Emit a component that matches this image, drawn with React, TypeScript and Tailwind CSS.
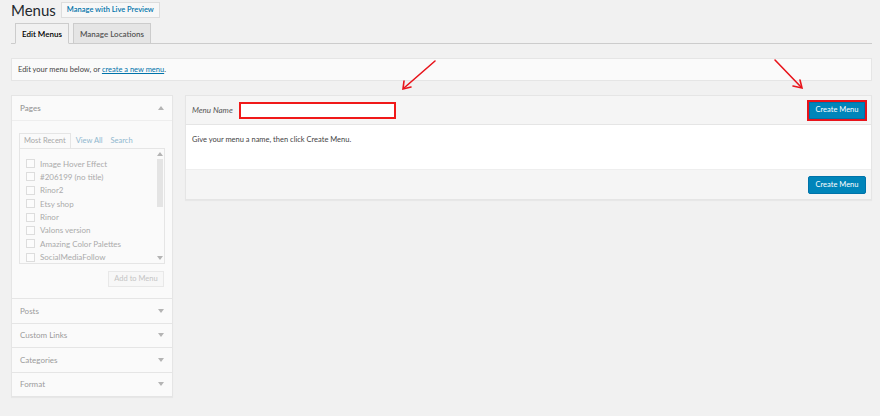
import React from 'react';

const pages = [
  'Image Hover Effect',
  '#206199 (no title)',
  'Rinor2',
  'Etsy shop',
  'Rinor',
  'Valons version',
  'Amazing Color Palettes',
  'SocialMediaFollow',
];

const sections = ['Posts', 'Custom Links', 'Categories', 'Format'];

function Caret({ up }: { up?: boolean }) {
  return (
    <span
      className={`w-0 h-0 border-l-[3px] border-r-[3px] border-l-transparent border-r-transparent ${
        up ? 'border-b-[4px] border-b-[#b4b4b4]' : 'border-t-[4px] border-t-[#b4b4b4]'
      }`}
    />
  );
}

function Arrows() {
  return (
    <svg className="absolute inset-0 pointer-events-none" width="880" height="416">
      <g stroke="#e8141b" strokeWidth="1.6" fill="none" strokeLinecap="round">
        <line x1="435" y1="61" x2="404" y2="88" />
        <polyline points="404,81 403,89 411,87" />
        <line x1="775" y1="60" x2="801" y2="87" />
        <polyline points="793,86 802,88 800,80" />
      </g>
    </svg>
  );
}

export default function App() {
  return (
    <div
      className="relative w-[880px] h-[416px] overflow-hidden bg-[#f1f1f1] text-[#444]"
      style={{ fontFamily: 'Lato, "Open Sans", sans-serif' }}
    >
      <div className="pl-[11px] pr-[8px]">
        {/* title */}
        <div className="flex items-center gap-[5px] h-[19px] pt-[1px]">
          <h1 className="text-[15px] leading-none text-[#23282d]">Menus</h1>
          <button className="h-[16px] px-[5px] border border-[#ddd] bg-[#f7f7f7] text-[#0073aa] text-[7.5px] font-semibold leading-none">
            Manage with Live Preview
          </button>
        </div>

        {/* tabs */}
        <div className="mt-[5px] flex items-end gap-[4px] pl-[4px] border-b border-[#ccc] h-[20px]">
          <div className="h-[21px] -mb-px px-[6px] flex items-center bg-[#f1f1f1] border border-[#ccc] border-b-[#f1f1f1] text-[8px] font-semibold text-[#000]">
            Edit Menus
          </div>
          <div className="h-[20px] px-[6px] flex items-center bg-[#e5e5e5] border border-[#ccc] border-b-0 text-[8px] font-semibold text-[#555]">
            Manage Locations
          </div>
        </div>

        {/* notice */}
        <div className="mt-[14px] h-[23px] flex items-center px-[6px] bg-[#fafafa] border border-[#e5e5e5] text-[7.5px] text-[#444]">
          Edit your menu below, or&nbsp;
          <span className="text-[#0073aa] underline">create a new menu</span>.
        </div>

        <div className="mt-[14px] flex gap-[12px] items-start">
          {/* sidebar */}
          <div className="w-[162px] flex flex-col shadow-[0_1px_1px_rgba(0,0,0,0.04)]">
            <div className="border border-[#e5e5e5] bg-[#fafafa]">
              <div className="h-[25px] flex items-center justify-between px-[8px] border-b border-[#eee] text-[8px] font-semibold text-[#9a9a9a]">
                Pages
                <Caret up />
              </div>
              <div className="h-[177px] px-[7px] pt-[12px]">
                <div className="flex text-[7.5px] text-[#a8a8a8]">
                  <div className="h-[15px] px-[4px] flex items-center border border-[#e5e5e5] border-b-0 bg-[#fafafa]">
                    Most Recent
                  </div>
                  <div className="h-[15px] px-[5px] flex items-center text-[#8fb8cf]">View All</div>
                  <div className="h-[15px] px-[3px] flex items-center text-[#8fb8cf]">Search</div>
                </div>
                <div className="h-[116px] w-[146px] border border-[#e5e5e5] bg-[#fafafa] flex">
                  <div className="flex-1 pl-[6px] pt-[10px] flex flex-col gap-[4.4px]">
                    {pages.map(p => (
                      <div key={p} className="flex items-center gap-[5px] h-[9px] text-[8px] text-[#aaa] leading-none">
                        <span className="w-[9px] h-[9px] border border-[#ddd] bg-[#fcfcfc]" />
                        {p}
                      </div>
                    ))}
                  </div>
                  <div className="w-[9px] flex flex-col items-center">
                    <div className="h-[10px] flex items-center"><Caret up /></div>
                    <div className="w-[6px] h-[48px] bg-[#e4e4e4]" />
                    <div className="flex-1" />
                    <div className="h-[10px] flex items-center"><Caret /></div>
                  </div>
                </div>
                <div className="mt-[7px] flex justify-end pr-[1px]">
                  <div className="h-[16px] w-[56px] flex items-center justify-center border border-[#e8e8e8] bg-[#f7f7f7] text-[7.5px] text-[#c4c4c4]">
                    Add to Menu
                  </div>
                </div>
              </div>
            </div>
            {sections.map(s => (
              <div
                key={s}
                className="h-[24.5px] flex items-center justify-between px-[8px] border border-t-0 border-[#e5e5e5] bg-[#fafafa] text-[8px] text-[#9a9a9a]"
              >
                {s}
                <Caret />
              </div>
            ))}
          </div>

          {/* menu panel */}
          <div className="flex-1 border border-[#e5e5e5] shadow-[0_1px_1px_rgba(0,0,0,0.04)]">
            <div className="h-[29px] flex items-center justify-between pl-[6px] pr-[4px] bg-[#f5f5f5] border-b border-[#e5e5e5]">
              <div className="flex items-center gap-[6px]">
                <span className="text-[8px] italic text-[#555]">Menu Name</span>
                <div className="w-[157px] h-[17px] border-2 border-[#f01919] bg-white" />
              </div>
              <div className="flex border-2 border-[#e8141b]">
                <button className="h-[17px] w-[56px] bg-[#0085ba] border border-[#0073aa] text-white text-[7.5px] leading-none">
                  Create Menu
                </button>
              </div>
            </div>
            <div className="h-[44px] bg-white px-[6px] pt-[9px] text-[7.5px] text-[#444]">
              Give your menu a name, then click Create Menu.
            </div>
            <div className="h-[30px] flex items-center justify-end pr-[5px] bg-[#f5f5f5] border-t border-[#eee]">
              <button className="h-[18px] w-[58px] rounded-[2px] bg-[#0085ba] border border-[#0073aa] text-white text-[7.5px] leading-none">
                Create Menu
              </button>
            </div>
          </div>
        </div>
      </div>
      <Arrows />
    </div>
  );
}
